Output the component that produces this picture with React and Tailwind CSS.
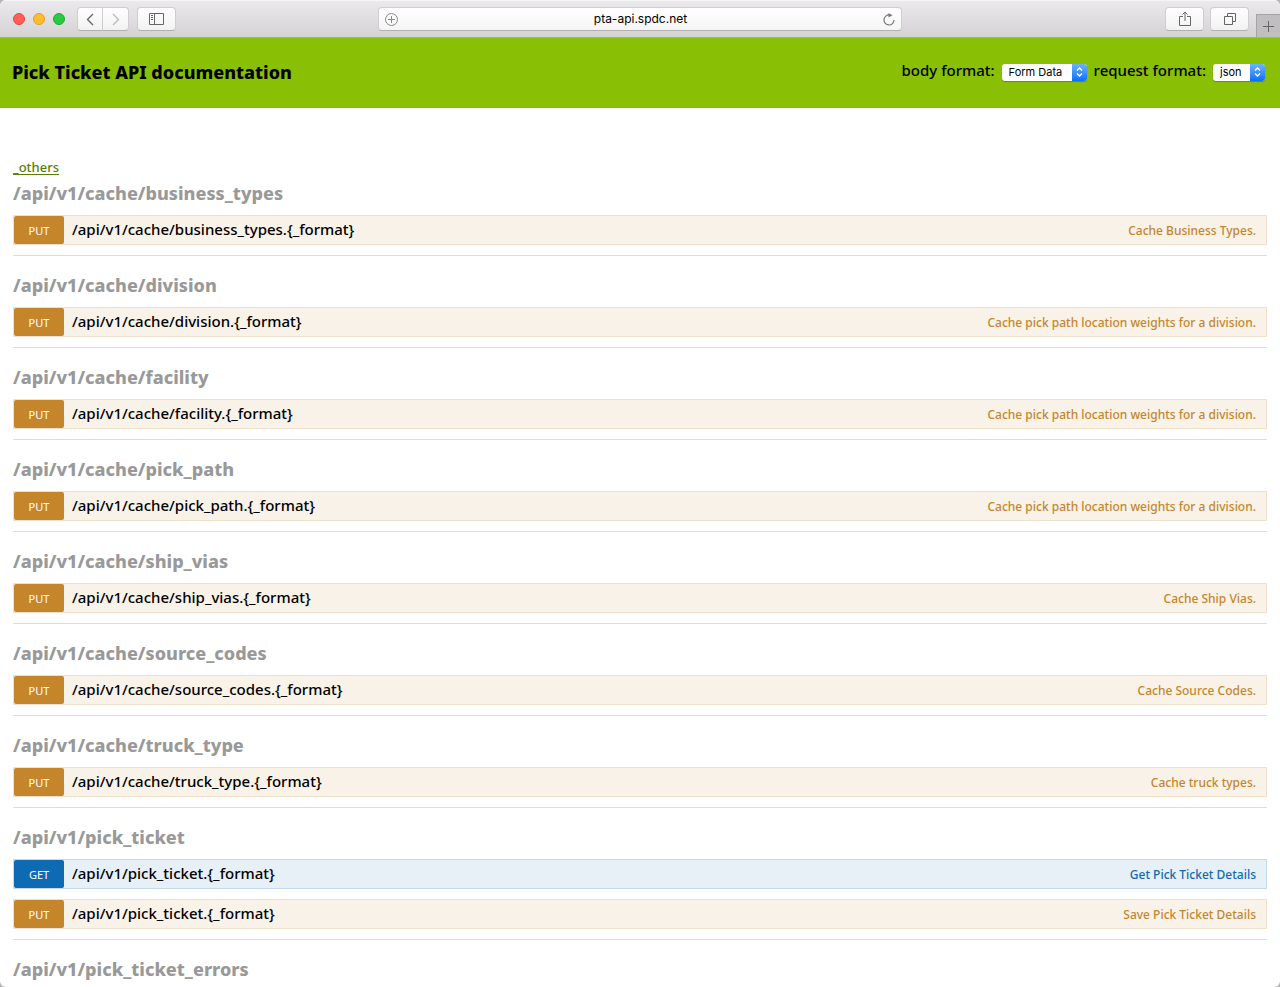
const groups = [
  { path: '/api/v1/cache/business_types', routes: [{ method: 'PUT', note: 'Cache Business Types.' }] },
  { path: '/api/v1/cache/division', routes: [{ method: 'PUT', note: 'Cache pick path location weights for a division.' }] },
  { path: '/api/v1/cache/facility', routes: [{ method: 'PUT', note: 'Cache pick path location weights for a division.' }] },
  { path: '/api/v1/cache/pick_path', routes: [{ method: 'PUT', note: 'Cache pick path location weights for a division.' }] },
  { path: '/api/v1/cache/ship_vias', routes: [{ method: 'PUT', note: 'Cache Ship Vias.' }] },
  { path: '/api/v1/cache/source_codes', routes: [{ method: 'PUT', note: 'Cache Source Codes.' }] },
  { path: '/api/v1/cache/truck_type', routes: [{ method: 'PUT', note: 'Cache truck types.' }] },
  {
    path: '/api/v1/pick_ticket',
    routes: [
      { method: 'GET', note: 'Get Pick Ticket Details' },
      { method: 'PUT', note: 'Save Pick Ticket Details' },
    ],
  },
  { path: '/api/v1/pick_ticket_errors', routes: [] },
]

const methodStyles = {
  PUT: { row: 'bg-[#f9f2e9] border-[#f0e0ca]', badge: 'bg-[#c5862b]', note: 'text-[#c5862b]' },
  GET: { row: 'bg-[#e7f0f7] border-[#c3d9ec]', badge: 'bg-[#0f6ab4]', note: 'text-[#0f6ab4]' },
}

const ToolbarButton = ({ label, className, children }) => (
  <button
    aria-label={label}
    className={`flex h-6 items-center justify-center border border-[#cfcdcf] border-b-[#b2b0b2] bg-linear-to-b from-white to-[#f2f2f2] ${className}`}
  >
    {children}
  </button>
)

const Toolbar = () => (
  <div className="flex h-[38px] shrink-0 items-center border-t border-b border-t-[#f6f5f6] border-b-[#a9a7a9] bg-linear-to-b from-[#ebe9eb] to-[#d4d2d4] font-['Inter',sans-serif]">
    <div className="flex flex-1 items-center">
      <div className="ml-[13px] flex gap-2">
        <span className="size-3 rounded-full border border-[#e2463f] bg-[#ff5f57]" />
        <span className="size-3 rounded-full border border-[#dfa023] bg-[#ffbd2e]" />
        <span className="size-3 rounded-full border border-[#1dac2b] bg-[#28ca42]" />
      </div>
      <div className="ml-3 flex">
        <ToolbarButton label="Back" className="w-[26px] rounded-l">
          <svg width="8" height="13" viewBox="0 0 8 13" fill="none" stroke="#666" strokeWidth="1.4">
            <path d="M7 1L1.5 6.5L7 12" />
          </svg>
        </ToolbarButton>
        <ToolbarButton label="Forward" className="-ml-px w-[27px] rounded-r">
          <svg width="8" height="13" viewBox="0 0 8 13" fill="none" stroke="#bbb" strokeWidth="1.4">
            <path d="M1 1L6.5 6.5L1 12" />
          </svg>
        </ToolbarButton>
      </div>
      <ToolbarButton label="Show sidebar" className="ml-2 w-[39px] rounded">
        <svg width="15" height="12" viewBox="0 0 15 12" fill="none" stroke="#666">
          <path d="M0.5 0.5H14.5V11.5H0.5ZM5.5 0.5V11.5M2 2.5H4M2 4.5H4M2 6.5H4" />
        </svg>
      </ToolbarButton>
    </div>

    <div className="flex h-6 w-[41%] items-center justify-between rounded border border-[#cfcdcf] border-b-[#b2b0b2] bg-linear-to-b from-white to-[#f5f5f5] px-1.5">
      <svg width="13" height="13" viewBox="0 0 13 13" fill="none" stroke="#888">
        <circle cx="6.5" cy="6.5" r="6" />
        <path d="M6.5 3V10M3 6.5H10" />
      </svg>
      <input
        aria-label="Address"
        defaultValue="pta-api.spdc.net"
        className="min-w-0 flex-1 bg-transparent text-center text-xs text-black outline-none"
      />
      <svg width="12" height="13" viewBox="0 0 12 13" fill="none" stroke="#777" strokeWidth="1.2">
        <path d="M6.5 2A5 5 0 1 0 11 7" />
        <path d="M5.5 0L9.5 2.2L5.5 4.6Z" fill="#777" stroke="none" />
      </svg>
    </div>

    <div className="flex flex-1 items-center justify-end self-stretch">
      <ToolbarButton label="Share" className="w-[39px] rounded">
        <svg width="12" height="16" viewBox="0 0 12 16" fill="none" stroke="#666">
          <path d="M4 5.5H0.5V14.5H11.5V5.5H8M6 10V1M3.5 3.5L6 1L8.5 3.5" />
        </svg>
      </ToolbarButton>
      <ToolbarButton label="Show all tabs" className="ml-1.5 w-[39px] rounded">
        <svg width="12" height="12" viewBox="0 0 12 12" fill="none" stroke="#666">
          <path d="M0.5 3.5H8.5V11.5H0.5ZM3.5 3.5V0.5H11.5V8.5H8.5" />
        </svg>
      </ToolbarButton>
      <button
        aria-label="New tab"
        className="ml-[7px] flex h-[23px] w-6 items-center justify-center self-end border-t border-l border-[#a5a3a5] bg-[#c0bec0]"
      >
        <svg width="11" height="11" viewBox="0 0 11 11" stroke="#666">
          <path d="M5.5 0V11M0 5.5H11" />
        </svg>
      </button>
    </div>
  </div>
)

const FormatSelect = ({ id, label, option, className }) => (
  <div className="flex items-center gap-[7px]">
    <label htmlFor={id} className="pb-1 text-[15px] leading-5 font-medium">{label}</label>
    <div className={`flex h-[17px] overflow-hidden rounded-[3px] bg-white shadow-[0_1px_1px_rgba(0,0,0,0.25)] ${className}`}>
      <select id={id} className="min-w-0 flex-1 appearance-none pl-[7px] font-['Inter',sans-serif] text-[11px] leading-4 outline-none">
        <option>{option}</option>
      </select>
      <span className="pointer-events-none flex w-[15px] items-center justify-center bg-linear-to-b from-[#6bb3fa] to-[#0a6cff]">
        <svg width="7" height="10" viewBox="0 0 7 10" fill="none" stroke="#fff" strokeWidth="1.3">
          <path d="M1 3.5L3.5 1L6 3.5M1 6.5L3.5 9L6 6.5" />
        </svg>
      </span>
    </div>
  </div>
)

const Route = ({ path, method, note }) => {
  const style = methodStyles[method]
  return (
    <li className={`mb-2.5 flex h-[30px] items-center border ${style.row}`}>
      <span className={`flex h-7 w-[50px] items-center justify-center rounded-xs pt-0.5 text-[11px] text-white ${style.badge}`}>
        {method}
      </span>
      <span className="ml-2 flex-1 pb-0.5 text-[15px] leading-6 font-medium">{path}.{'{_format}'}</span>
      <span className={`pt-0.5 pr-2.5 text-xs font-medium ${style.note}`}>{note}</span>
    </li>
  )
}

const App = () => (
  <div className="bg-[#b5b5b5]">
    <div className="flex min-h-screen flex-col overflow-hidden rounded-md bg-white font-['Noto_Sans','Open_Sans',sans-serif] text-black">
      <Toolbar />
      <header className="flex h-[70px] shrink-0 items-center justify-between bg-[#89bf04] pr-[15px] pb-0.5 pl-3">
        <h1 className="text-lg leading-6 font-extrabold">Pick Ticket API documentation</h1>
        <div className="flex gap-[7px]">
          <FormatSelect id="body-format" label="body format:" option="Form Data" className="w-[85px]" />
          <FormatSelect id="request-format" label="request format:" option="json" className="w-[52px]" />
        </div>
      </header>
      <main className="px-[13px] pt-[49px]">
        <a href="#others" className="mb-[5px] block w-fit text-[13px] leading-5 font-medium text-[#547f00] underline underline-offset-2">_others</a>
        <div className="flex flex-col gap-[18px]">
          {groups.map(({ path, routes }) => (
            <section key={path}>
              <h2 className="pb-0.5 text-lg leading-[22px] font-extrabold text-[#999]">{path}</h2>
              {routes.length > 0 && (
                <ul className="mt-[9px] border-b border-[#ddd]">
                  {routes.map((route) => (
                    <Route key={route.method} path={path} {...route} />
                  ))}
                </ul>
              )}
            </section>
          ))}
        </div>
      </main>
    </div>
  </div>
)

export default App
